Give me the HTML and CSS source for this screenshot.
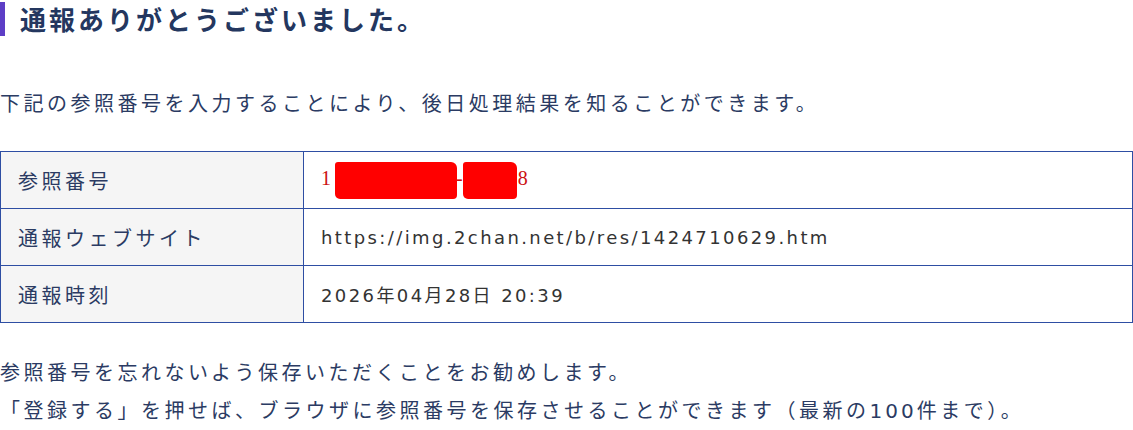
FILE: index.html
```html
<!DOCTYPE html>
<html lang="ja">
<head>
  <meta charset="UTF-8" />
  <meta name="viewport" content="width=device-width, initial-scale=1.0" />
  <title>通報完了</title>
  <link rel="stylesheet" href="styles.css">
</head>
<body>

<div class="kanryo">
  <h1 class="midashi">通報ありがとうございました。</h1>

  <p class="setsumei">下記の参照番号を入力することにより、後日処理結果を知ることができます。</p>

  <table class="tsuho-table">
    <tr>
      <th>参照番号</th>
      <td class="sansho">1<span class="nuri nuri-1"></span>-<span class="nuri nuri-2"></span>8</td>
    </tr>
    <tr>
      <th>通報ウェブサイト</th>
      <td>https://img.2chan.net/b/res/1424710629.htm</td>
    </tr>
    <tr>
      <th>通報時刻</th>
      <td>2026年04月28日 20:39</td>
    </tr>
  </table>

  <!-- 保存のお知らせ -->
  <div class="oshirase">
    <p>参照番号を忘れないよう保存いただくことをお勧めします。</p>
    <p>「登録する」を押せば、ブラウザに参照番号を保存させることができます（最新の<span class="suji">100</span>件まで）。</p>
  </div>
</div>

</body>
</html>
```

FILE: styles.css
```css
html, body {
  margin: 0;
  padding: 0;
  background: #fff;
  font-family: "Noto Sans CJK JP", "Noto Sans", sans-serif;
  color: #2b3b63;
}

.kanryo {
  width: 1133px;
}

.midashi {
  margin: 2px 0 0;
  padding-left: 15px;
  border-left: 5px solid #5d3ec6;
  font-size: 26px;
  line-height: 34px;
  letter-spacing: 3px;
  font-weight: bold;
  color: #24375f;
}

.setsumei {
  margin: 50px 0 0;
  font-size: 20px;
  line-height: 34px;
  letter-spacing: 3.5px;
}

.tsuho-table {
  width: 100%;
  margin-top: 31px;
  border-collapse: collapse;
}

.tsuho-table th,
.tsuho-table td {
  height: 56px;
  padding: 0 17px;
  border: 1px solid #2e4ea3;
  font-size: 20px;
  text-align: left;
  vertical-align: middle;
}

.tsuho-table th {
  width: 268px;
  background-color: #f5f5f5;
  font-weight: normal;
  letter-spacing: 3.5px;
  color: #2b3b63;
}

.tsuho-table td {
  font-family: "DejaVu Sans", "Noto Sans CJK JP", sans-serif;
  font-size: 18px;
  color: #333;
  letter-spacing: 2.4px;
}

.sansho {
  font-family: "Liberation Serif", serif !important;
  color: #cc1111 !important;
  font-size: 20px !important;
  letter-spacing: 0 !important;
}

.nuri {
  display: inline-block;
  height: 37px;
  vertical-align: middle;
  background: #ff0000;
  border-radius: 3px 6px 4px 5px;
}

.nuri-1 {
  width: 122px;
  margin: 0 -1px 0 4px;
}

.nuri-2 {
  width: 54px;
  margin: 0 1px 0 0;
}

.oshirase {
  margin-top: 30px;
}

.oshirase p {
  margin: 0;
  font-size: 20px;
  line-height: 38px;
  letter-spacing: 3.5px;
}

.suji {
  font-family: "DejaVu Sans", sans-serif;
  letter-spacing: 3px;
}
```
